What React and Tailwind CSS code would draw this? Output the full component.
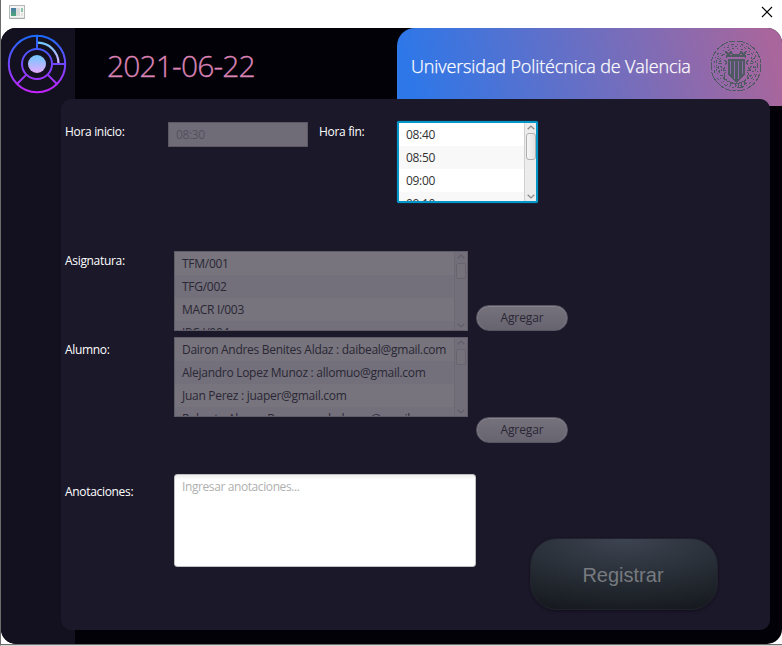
import React from "react";

const HOURS = ["08:40", "08:50", "09:00", "09:10"];
const SUBJECTS = ["TFM/001", "TFG/002", "MACR I/003", "IPC I/004"];
const STUDENTS = [
  "Dairon Andres Benites Aldaz : daibeal@gmail.com",
  "Alejandro Lopez Munoz : allomuo@gmail.com",
  "Juan Perez : juaper@gmail.com",
  "Roberto Alonso Barrera : robalonso@gmail.com",
];

function WindowIcon() {
  return (
    <svg width="16" height="14" viewBox="0 0 16 14">
      <defs>
        <linearGradient id="win" x1="0" y1="0" x2="0" y2="1">
          <stop offset="0" stopColor="#4a7ba8" />
          <stop offset="1" stopColor="#4fa878" />
        </linearGradient>
      </defs>
      <rect x="0.5" y="0.5" width="15" height="13" fill="#f4f4f4" stroke="#b4b8ba" />
      <path d="M1 13.3h14" stroke="#a5a9aa" />
      <rect x="2" y="3" width="5" height="8" fill="url(#win)" />
      <rect x="7" y="3" width="4" height="8" fill="#dcdcdc" />
      <rect x="12" y="3" width="2" height="4" fill="#8dc6ac" />
      <rect x="12" y="8" width="2" height="3" fill="#e2e4e3" />
    </svg>
  );
}

function Logo() {
  return (
    <svg width="60" height="60" viewBox="0 0 60 60" fill="none">
      <defs>
        <linearGradient id="ring" gradientUnits="userSpaceOnUse" x1="30" y1="1" x2="30" y2="59">
          <stop offset="0" stopColor="#1a6dff" />
          <stop offset="1" stopColor="#c822ff" />
        </linearGradient>
        <linearGradient id="soft" gradientUnits="userSpaceOnUse" x1="30" y1="8" x2="30" y2="32">
          <stop offset="0" stopColor="#6dc7ff" />
          <stop offset="1" stopColor="#e6abff" />
        </linearGradient>
        <linearGradient id="core" x1="0" y1="0" x2="0" y2="1">
          <stop offset="0" stopColor="#6dc7ff" />
          <stop offset="1" stopColor="#e6abff" />
        </linearGradient>
      </defs>
      <g stroke="url(#ring)" strokeWidth="2">
        <circle cx="30" cy="30" r="28.2" />
        <circle cx="30" cy="30" r="15" />
        <path d="M30.01 2L30 15M45 30L58 30.01M40.6 40.6L50 50M19.4 40.6L10 50" />
      </g>
      <path d="M31 8.7A20.8 20.8 0 0 1 51.5 29" stroke="url(#soft)" strokeWidth="2.2" />
      <circle cx="30" cy="30" r="9" fill="url(#core)" />
    </svg>
  );
}

function Seal() {
  return (
    <svg width="52" height="52" viewBox="0 0 52 52" fill="none" stroke="#4f5962" strokeWidth="1" shapeRendering="crispEdges">
      <circle cx="26" cy="26" r="25" strokeDasharray="6 2 8 1 4 1" />
      <circle cx="26" cy="26" r="22" strokeDasharray="2 3 1 2 3 3 1 3" />
      <circle cx="26" cy="26" r="20" strokeDasharray="1 2 2 3 1 3 2 4" />
      <circle cx="26" cy="26" r="17.5" strokeDasharray="2 3 1 3 2 2" />
      <path d="M7 18l4 2-2 3 4 1M6 28l5-2 1 4-4 2M10 36l4-1 1 4M45 18l-4 2 2 3-4 1M46 28l-5-2-1 4 4 2M42 36l-4-1-1 4M12 14l4 1 1 3M40 14l-4 1-1 3" strokeDasharray="3 1" />
      <path d="M15 27l-2 3 3 1-2 4M38 27l2 3-3 1 2 4M14 20l3 2-2 3M39 20l-3 2 2 3" strokeDasharray="3 1" />
      <path d="M13 37Q26 50 39 37" strokeDasharray="5 1 2 1" />
      <path d="M20 46v-3h3M25 47v-4M28 43v4h3v-4M34 45l1-3 2 2" />
      <path d="M16 11l2 4 3-3 2 3h6l2-3 3 3 2-4M17 16h18" strokeWidth="1.5" />
      <path d="M18 19h17v15l-4 5-4.500 4-4.500-4-4-5z" fill="#4f5962" stroke="none" />
      <path d="M20.500 21v13M24.500 21v18M28.500 21v18M32.500 21v13" stroke="#9069ac" />
    </svg>
  );
}

function Chevron({ className, down }) {
  return (
    <svg width="8" height="5" viewBox="0 0 8 5" fill="none" stroke="currentColor" strokeWidth="1.4" className={className}>
      <path d={down ? "M0.7 0.8L4 3.9L7.3 0.8" : "M0.7 4.2L4 1.1L7.3 4.2"} />
    </svg>
  );
}

function DisabledList({ items }) {
  return (
    <div className="flex h-20 w-[294px] shrink-0 overflow-hidden border border-[#605d69] bg-[#75727c]">
      <ul className="min-w-0 flex-1 overflow-hidden">
        {items.map((t) => (
          <li
            key={t}
            className="h-[23px] overflow-hidden bg-[#77747d] pl-[7px] text-[12px] leading-[24px] tracking-[-0.28px] whitespace-nowrap text-[#2a2735] even:bg-[#73707b]"
          >
            {t}
          </li>
        ))}
      </ul>
      <div className="flex w-[13px] flex-col items-center border-l border-[#6c6975] bg-[#726f7a] py-[2px] text-[#615e6a]">
        <Chevron />
        <div className="mt-1 h-4 w-[10px] rounded-[2px] border border-[#686571] bg-[#75727c]" />
        <Chevron down className="mt-auto" />
      </div>
    </div>
  );
}

function AddButton({ className }) {
  return (
    <button
      className={
        "h-[26px] w-[92px] rounded-full border border-[#5a5764] bg-linear-to-b from-[#75727c] to-[#676470] text-[12px] leading-[24px] tracking-[-0.1px] text-[#2a2735] shadow-[inset_0_1px_0_#85828b,inset_1px_0_0_#7d7a84,inset_-1px_0_0_#7d7a84] " +
        className
      }
    >
      Agregar
    </button>
  );
}

function Label({ className, children }) {
  return <span className={"shrink-0 text-[12px] leading-[16px] tracking-[-0.32px] text-white " + className}>{children}</span>;
}

export default function App() {
  return (
    <div className="h-[646px] w-[782px] overflow-hidden border-b border-l border-b-[#d5d5d5] border-l-[#6b6b6b] bg-white font-['Open_Sans','Noto_Sans',sans-serif]">
      <div className="flex h-7 items-start justify-between pl-2 pr-[9px]">
        <div className="pt-[5px]">
          <WindowIcon />
        </div>
        <svg width="12" height="12" viewBox="0 0 12 12" stroke="#000" strokeWidth="1.1" className="mt-[6px]">
          <path d="M1 1L11 11M11 1L1 11" />
        </svg>
      </div>

      <div className="h-[617px] border-b border-[#6e6e6e]">
        <div className="flex h-[616px] overflow-hidden rounded-[15px] bg-[#020107]">
          <aside className="w-[74px] shrink-0 bg-[#13101f] pt-[6px] pl-[6px]">
            <Logo />
          </aside>

          <div className="min-w-0 flex-1">
            <header className="flex h-[78px]">
              <div className="w-[322px] pt-[18px] pl-8 text-[30px] leading-[40px] font-light tracking-[-0.85px] whitespace-nowrap text-[#da83b5] [-webkit-text-stroke:0.3px_#da83b5]">
                2021-06-22
              </div>
              <div className="flex flex-1 items-start rounded-tl-[18px] bg-[linear-gradient(75deg,#2e77e8_5%,#a8669c_96%)] pl-[14px]">
                <div className="w-[299px] pt-[24px] text-[18px] leading-7 font-light tracking-[-0.12px] whitespace-nowrap text-white [-webkit-text-stroke:0.25px_#ffffff]">
                  Universidad Politécnica de Valencia
                </div>
                <div className="pt-3">
                  <Seal />
                </div>
              </div>
            </header>

            <main className="relative -mt-[7px] -ml-[14px] h-[531px] w-[709px] rounded-[10px] bg-[#1b182a] pl-1">
              <div className="flex h-[152px] items-start pt-[22px]">
                <Label className="mt-[3px] w-[103px]">Hora inicio:</Label>
                <div className="mt-px h-[25px] w-[140px] border border-[#5c5965] bg-[#6f6c77] pl-[7px] text-[12px] leading-[24px] tracking-[-0.35px] text-[#54515e]">
                  08:30
                </div>
                <Label className="mt-[3px] ml-[11px] w-[78px]">Hora fin:</Label>
                <div className="flex h-[82px] w-[141px] overflow-hidden rounded-[2px] border-2 border-[#0496c7] bg-white shadow-[0_0_1px_#0496c7]">
                  <ul className="flex-1 overflow-hidden">
                    {HOURS.map((h) => (
                      <li key={h} className="h-[23px] bg-white pl-[7px] text-[12px] leading-[23px] tracking-[-0.3px] text-[#323232] even:bg-[#f8f8f8]">
                        {h}
                      </li>
                    ))}
                  </ul>
                  <div className="flex w-[12px] flex-col items-center border-l border-[#d0d0d0] bg-[#ececec] py-[2px] text-[#8c8c8c]">
                    <Chevron />
                    <div className="mt-[3px] h-[27px] w-[10px] rounded-[3px] border border-[#b0b0b0] bg-linear-to-r from-[#f6f6f6] to-[#e2e2e2]" />
                    <Chevron down className="mt-auto" />
                  </div>
                </div>
              </div>

              <div className="flex h-[86px] items-start">
                <Label className="mt-[2px] w-[109px]">Asignatura:</Label>
                <DisabledList items={SUBJECTS} />
                <AddButton className="mt-[54px] ml-2" />
              </div>

              <div className="flex h-[137px] items-start">
                <Label className="mt-[5px] w-[109px]">Alumno:</Label>
                <DisabledList items={STUDENTS} />
                <AddButton className="mt-20 ml-2" />
              </div>

              <div className="flex items-start">
                <Label className="mt-[10px] w-[109px]">Anotaciones:</Label>
                <div className="h-[93px] w-[302px] shrink-0 rounded-[3px] border border-[#c0c0c0] bg-linear-to-b from-[#ededed] to-white to-[5px] pl-[7px] text-[12px] leading-[24px] tracking-[-0.4px] text-[#b0b0b0]">
                  Ingresar anotaciones...
                </div>
                <button className="mt-16 ml-[54px] h-[72px] w-[188px] rounded-[27px] border border-[#22212e] bg-[radial-gradient(ellipse_110%_110%_at_50%_0%,#3d4451_0%,#2b313a_45%,#14181d_100%)] pt-[2px] pr-[2px] font-['Liberation_Sans',Arial,sans-serif] text-[20px] text-[#777a7f] shadow-[0_1px_3px_#100e19]">
                  Registrar
                </button>
              </div>
            </main>
          </div>
        </div>
      </div>
    </div>
  );
}
